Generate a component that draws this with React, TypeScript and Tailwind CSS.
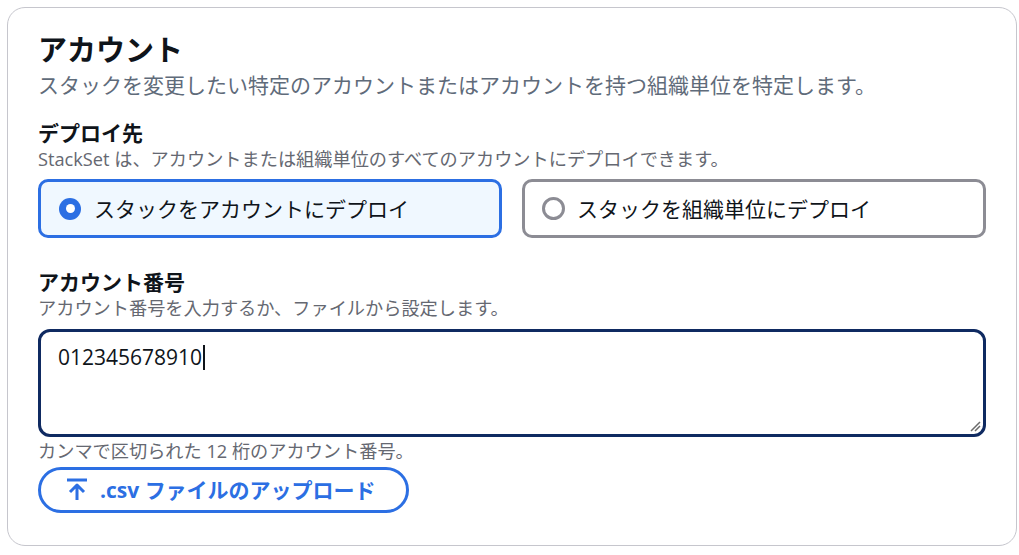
import React from "react";

const font = {
  fontFamily: '"Open Sans", "Noto Sans CJK JP", sans-serif',
};

function UploadIcon() {
  return (
    <svg width="22" height="24" viewBox="0 0 22 24" fill="none">
      <path d="M1 2h20" stroke="#2c6fe3" strokeWidth="3" />
      <path
        d="M11 22V8M4 14l7-7 7 7"
        stroke="#2c6fe3"
        strokeWidth="3"
        strokeLinejoin="round"
      />
    </svg>
  );
}

export default function App() {
  return (
    <div
      className="min-h-[555px] w-[1019px] bg-white p-[7px] text-[#0f141a]"
      style={font}
    >
      <div className="h-[539px] w-[1010px] rounded-[18px] border border-[#c6c6cd] bg-white pl-[30px] pr-[30px] pt-[24px]">
        {/* HEADER */}
        <h1 className="text-[29px] font-bold leading-[36px]">アカウント</h1>
        <p className="mt-[2px] text-[21px] leading-[30px] text-[#5f6b7a]">
          スタックを変更したい特定のアカウントまたはアカウントを持つ組織単位を特定します。
        </p>

        {/* DEPLOY TARGET */}
        <div className="mt-[19px]">
          <h3 className="text-[21px] font-bold leading-[28px]">デプロイ先</h3>
          <p className="text-[18.2px] leading-[25px] text-[#656871]">
            StackSet は、アカウントまたは組織単位のすべてのアカウントにデプロイできます。
          </p>
          <div className="mt-[7px] grid w-[948px] grid-cols-2 gap-[20px]">
            <div className="flex h-[59px] items-center rounded-[10px] border-[3px] border-[#2c6fe3] bg-[#f0f8ff] pl-[18px]">
              <span className="flex h-[22px] w-[22px] items-center justify-center rounded-full bg-[#2c6fe3]">
                <span className="h-[9px] w-[9px] rounded-full bg-white" />
              </span>
              <span className="ml-[13px] text-[21px] leading-[28px]">
                スタックをアカウントにデプロイ
              </span>
            </div>
            <div className="flex h-[59px] items-center rounded-[10px] border-[3px] border-[#8c8c94] bg-white pl-[17px]">
              <span className="h-[23px] w-[23px] rounded-full border-[3px] border-[#8c8c94]" />
              <span className="ml-[12px] text-[21px] leading-[28px]">
                スタックを組織単位にデプロイ
              </span>
            </div>
          </div>
        </div>

        {/* ACCOUNT NUMBERS */}
        <div className="mt-[30px]">
          <h3 className="text-[21px] font-bold leading-[28px]">アカウント番号</h3>
          <p className="text-[18.2px] leading-[25px] text-[#656871]">
            アカウント番号を入力するか、ファイルから設定します。
          </p>
          <div className="relative mt-[8px] h-[108px] w-[948px] rounded-[12px] border-[3px] border-[#0f2a61] bg-white px-[17px] pt-[8px]">
            <span className="text-[21px] leading-[28px]">012345678910</span>
            <span className="ml-[1px] inline-block h-[25px] w-[2px] translate-y-[5px] bg-[#0f141a]" />
            <svg
              className="absolute bottom-[2px] right-[2px]"
              width="12"
              height="12"
              viewBox="0 0 12 12"
            >
              <path d="M2 11L11 2M6 11l5-5" stroke="#6b6b6b" strokeWidth="1.5" />
            </svg>
          </div>
          <p className="mt-[2px] text-[18.2px] leading-[25px] text-[#656871]">
            カンマで区切られた 12 桁のアカウント番号。
          </p>
          <button className="mt-[3px] flex h-[46px] items-center rounded-full border-[3px] border-[#2c6fe3] bg-white pl-[25px] pr-[30px] text-[21px] font-bold text-[#2c6fe3]">
            <UploadIcon />
            <span className="ml-[12px] leading-[28px]">.csv ファイルのアップロード</span>
          </button>
        </div>
      </div>
    </div>
  );
}
